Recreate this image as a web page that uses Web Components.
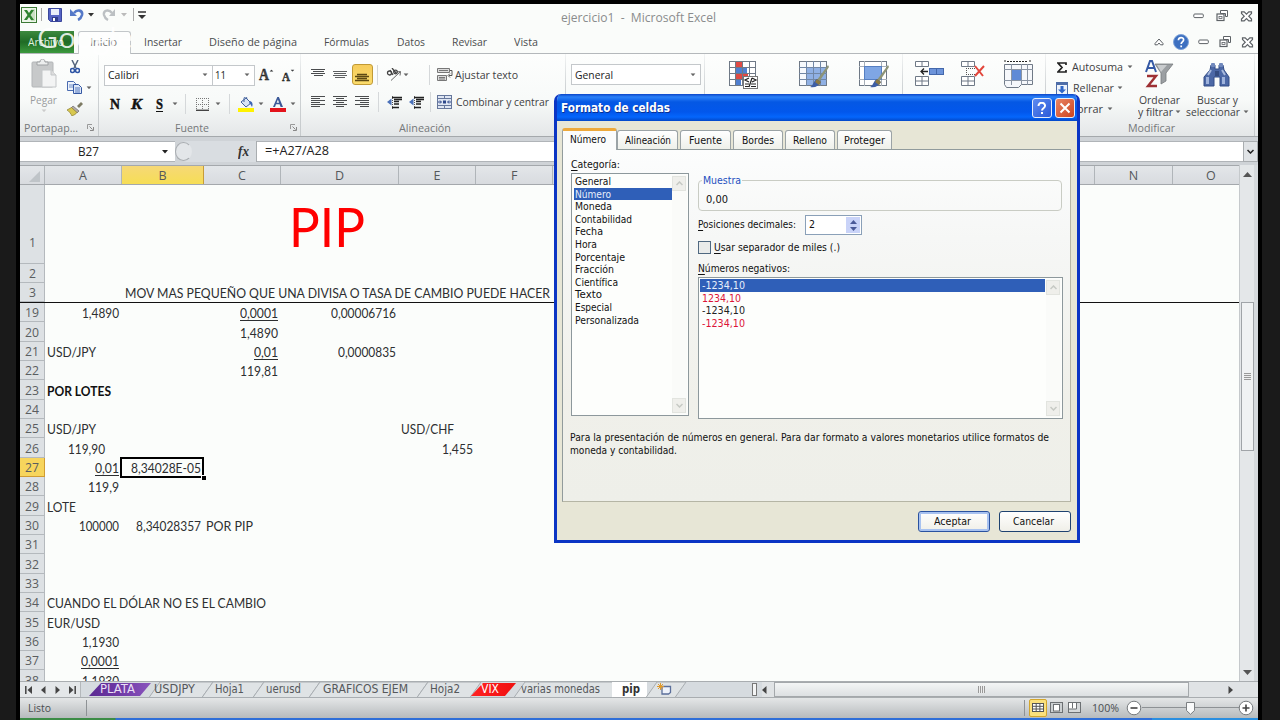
<!DOCTYPE html>
<html lang="es">
<head>
<meta charset="utf-8">
<title>ejercicio1 - Microsoft Excel</title>
<style>
    html, body { margin: 0; height: 100%; }
    body {
        width: 1280px;
        height: 720px;
        overflow: hidden;
        background: #1a1a1a;
        font: 12px/14px "Open Sans", "Noto Sans", sans-serif;
        color: #444;
    }
</style>
</head>
<body>
<excel-app></excel-app>

<script>
const ICONS = {
    excel: [16, 16, '<rect x=".5" y=".5" width="15" height="15" fill="#eef6ea" stroke="#3c7a35"/><rect x="10" y="2" width="4" height="12" fill="#c9e0c2"/><path d="M3 3h3l2 3 2-3h3L9.5 8l3.500 5h-3L8 10l-2 3H3l3.500-5z" fill="#2f8430"/>'],
    save: [14, 14, '<path d="M.5.5h13v13h-11l-2-2z" fill="#5563c4" stroke="#3a479c"/><path d="M3 1h8v6H3z" fill="#e9edfa"/><path d="M4 9h6v4H4z" fill="#2f3c8c"/><path d="M5 10h2v3H5z" fill="#fff"/>'],
    undo: [14, 13, '<path d="M4 5C7 1 13 2 12 7c-.5 2-2 4-4 5" fill="none" stroke="#5579c8" stroke-width="2.600"/><path d="M0 1v7h7z" fill="#5579c8"/>'],
    redo: [14, 13, '<path d="M10 5C7 1 1 2 2 7c.5 2 2 4 4 5" fill="none" stroke="#bcc0c3" stroke-width="2.400"/><path d="M13 1v7H7z" fill="#bcc0c3"/>'],
    qat: [8, 8, '<path d="M0 1h8" stroke="#333" stroke-width="1.500"/><path d="M0 4h8L4 8z" fill="#333"/>'],
    down: [6, 4, '<path d="M0 0h6L3 3.500z" fill="currentColor"/>'],
    min: [12, 6, '<rect x=".8" y="1" width="9.500" height="3.600" rx="1" fill="#fff" stroke="#5d6266"/>'],
    restore: [13, 12, '<path d="M4.500.5h7v6h-2v-3h-5z" fill="#fff" stroke="#5d6266"/><rect x="1" y="4" width="7" height="6.500" fill="#fff" stroke="#5d6266" stroke-width="1.200"/><rect x="3" y="6.500" width="3" height="2" fill="none" stroke="#5d6266" stroke-width=".8"/>'],
    close: [13, 11, '<path d="M1.500.8h2.700l2.300 2.300L8.800.8h2.700v1.700l-2.700 2.700 2.700 2.800v1.800H8.800L6.500 7.500 4.200 9.800H1.500V8l2.700-2.800-2.700-2.700z" fill="#fff" stroke="#5d6266" stroke-width="1.200"/>'],
    up: [10, 8, '<path d="M1 5.500L5 1l4 4.500v1.300H6.500L5 5 3.500 6.800H1z" fill="#fff" stroke="#5d6266"/>'],
    help: [16, 16, '<circle cx="8" cy="8" r="7.500" fill="#3d70c0" stroke="#7ea3d8"/><path d="M5.400 6.200c0-3.600 5.400-3.300 5.200-.3C10.500 8 8.200 7.800 8.200 10M8.200 11.500v1.700" fill="none" stroke="#fff" stroke-width="1.700"/>'],
    paste: [28, 31, '<rect x="2" y="3" width="21" height="25" rx="1" fill="#c7c9ca" stroke="#b3b6b8"/><path d="M7 6V3h3c0-4 5-4 5 0h3v3z" fill="#eceeee" stroke="#9ea1a3"/><path d="M12 11h9l5 5v12H12z" fill="#f3f4f4" stroke="#c3c6c8"/><path d="M21 11v5h5" fill="#ddd" stroke="#c3c6c8"/>'],
    cut: [10, 14, '<path d="M2 0l4 8M8 0L4 8" stroke="#55657d" stroke-width="1.500"/><circle cx="2.500" cy="10.500" r="2" fill="none" stroke="#2e55a5" stroke-width="1.600"/><circle cx="7.500" cy="10.500" r="2" fill="none" stroke="#2e55a5" stroke-width="1.600"/>'],
    copy: [15, 13, '<path d="M.5.5h6l2 2v7h-8z" fill="#eef3fb" stroke="#4a6bb0"/><path d="M2 4h4M2 6h4" stroke="#6f8dc8"/><path d="M6.500 3.500h5l3 3v6h-8z" fill="#dfe8f8" stroke="#3558a3"/><path d="M8 7h5M8 9h5M8 11h5" stroke="#5478bd"/>'],
    brush: [16, 14, '<path d="M10 4l4-4 2 2-4 4z" fill="#7d7a63"/><path d="M6 4l6 5-2 2-6-5z" fill="#b3aca9" stroke="#6c6870" stroke-width=".7"/><path d="M4.500 5.500L0 8c2 1 4 4 5 6 2-1 4-2 5-3.500z" fill="#d8c84f" stroke="#8a7c2e" stroke-width=".7"/>'],
    launcher: [7, 7, '<path d="M.5 5V.5H5" fill="none" stroke="#999"/><path d="M2.500 2.500l3 3M6.500 3v3.500H3" fill="none" stroke="#888"/>'],
    borders: [13, 13, '<path d="M.5 0v12M6.500 0v12M12.500 0v12M0 .5h13M0 6.500h13" stroke="#777" stroke-dasharray="1 1" fill="none"/><path d="M0 12.300h13" stroke="#444" stroke-width="1.400"/>'],
    fill: [16, 15, '<path d="M3 5l5-4 5 5-5 4z" fill="#d9e4f5" stroke="#42609c"/><path d="M6 5V1.500a1.500 1.500 0 013 0" fill="none" stroke="#42609c"/><path d="M12 4c3 1 3 4 2 6-1-1-1-3-3-4z" fill="#3d65b5"/><rect y="11" width="16" height="4" fill="#fff200"/>'],
    fontcolor: [16, 15, '<path d="M3 10L7.300 0h1.600L13 10h-2.400l-1-2.700H6L5 10zM6.600 5.700h2.500L7.900 2.400z" fill="#3b5898"/><rect y="11" width="16" height="4" fill="#e3131b"/>'],
    atop: [15, 9, '<path d="M0 1.500h14M2 3.500h11M0 5.500h14M3 7.500h9" stroke="#4a4c4e" stroke-width="1.200"/>'],
    amid: [15, 9, '<path d="M0 1.500h14M1 3.500h12M0 5.500h14M2 7.500h10" stroke="#5d5f61" stroke-width="1.200"/>'],
    abot: [15, 9, '<path d="M2 1.500h10M0 3.500h14M2 5.500h10M0 7.500h14" stroke="#5d4913" stroke-width="1.300"/>'],
    left: [15, 12, '<path d="M0 .5h14M0 2.500h9M0 4.500h14M0 6.500h9M0 8.500h14M0 10.500h9" stroke="#4a4c4e" stroke-width="1.200"/>'],
    center: [15, 12, '<path d="M0 .5h14M3 2.500h8M0 4.500h14M3 6.500h8M0 8.500h14M3 10.500h8" stroke="#4a4c4e" stroke-width="1.200"/>'],
    right: [15, 12, '<path d="M0 .5h14M5 2.500h9M0 4.500h14M5 6.500h9M0 8.500h14M5 10.500h9" stroke="#4a4c4e" stroke-width="1.200"/>'],
    indent: [16, 13, '<path d="M5 1.500h10M7 3.500h8M7 5.500h5M7 8h5M5 11.500h7" stroke="#222" stroke-width="1.600"/><path d="M0 6l4.500-3.500v7z" fill="#4b71b9"/><path d="M5.500 0v13" stroke="#555" stroke-dasharray="1 1"/>'],
    orient: [16, 13, '<path d="M5 12.500L14 4M14.500 3.500l-4 .5M14.500 3.500l-.5 4" stroke="#666" fill="none"/><circle cx="3.500" cy="5" r="2" fill="none" stroke="#444" stroke-width="1.300"/><path d="M4 2l3 5M6 0l4 5" stroke="#444" stroke-width="1.300"/><circle cx="9.500" cy="4" r="1.800" fill="none" stroke="#444" stroke-width="1.300"/>'],
    wrap: [16, 15, '<path d="M.5 1.500h12v4H.5zM.5 8.500h9v5h-9z" fill="#ddd" stroke="#777"/><path d="M2 3.500h9M2 10.500h6M2 12h6" stroke="#777"/><path d="M13 3.500h2v5h-3M13 6.500l-2 2 2 2" fill="none" stroke="#555"/>'],
    merge: [16, 14, '<rect x=".5" y=".5" width="14" height="13" fill="#dfe6f3" stroke="#66779c"/><path d="M0 3.500h15M0 10.500h15M7.500 0v4M7.500 10v4" stroke="#66779c"/><path d="M1 7h3M11 7h3M3 5.500L4.500 7 3 8.500M12 5.500L10.500 7 12 8.500" stroke="#2c468a" fill="none"/><rect x="6" y="5.500" width="3" height="3" fill="#2c468a"/>'],
    cond: [29, 28, '<rect x=".5" y=".5" width="26" height="24" fill="#fff" stroke="#6f7986"/><rect x="7" y="1" width="6" height="6" fill="#e04a44"/><rect x="7" y="7" width="11" height="6" fill="#4f7fd0"/><rect x="7" y="13" width="12" height="5" fill="#e04a44"/><rect x="7" y="19" width="5" height="5" fill="#4f7fd0"/><path d="M6.500 0v25M13.500 0v25M20.500 0v25M0 6.500h27M0 12.500h27M0 18.500h27" stroke="#6f7986" fill="none"/><rect x="14.500" y="15.500" width="14" height="12" fill="#fff" stroke="#777"/><path d="M20 17l-4 2 4 2M16 23h4M16 25.500h4M23 17l4 2-4 2M22 23h5M22 25.500h5M20 26l3-9" stroke="#222" fill="none" stroke-width="1.200"/>'],
    table: [30, 28, '<rect x=".5" y=".5" width="27" height="24" fill="#f6f9fd" stroke="#6f7986"/><rect x="7" y="7" width="20" height="17" fill="#8fb0e4"/><path d="M7.500 0v25M14.500 0v25M21.500 0v25M0 6.500h28M0 12.500h28M0 18.500h28" stroke="#7187a6" fill="none"/><path d="M29 4L18 19l2 2L30 6z" fill="#8d9477"/><path d="M18 18l4 3c-2 4-6 6-11 5 4-2 3-6 7-8z" fill="#3e5ea4"/><path d="M18 18l4 3-2 3-4-3z" fill="#8c7a42"/>'],
    style: [30, 28, '<rect x=".5" y=".5" width="27" height="24" fill="#fff" stroke="#6f7986"/><path d="M5.500 0v25M22.500 0v25M0 5.500h28M0 18.500h28" stroke="#a7afb8" fill="none"/><rect x="5.500" y="5.500" width="17" height="13" fill="#7fa6e4" stroke="#567fc2"/><path d="M29 4L18 19l2 2L30 6z" fill="#8d9477"/><path d="M18 18l4 3c-2 4-6 6-11 5 4-2 3-6 7-8z" fill="#3e5ea4"/><path d="M18 18l4 3-2 3-4-3z" fill="#8c7a42"/>'],
    insert: [29, 26, '<path d="M.5.5h13v5H.5zM.5 15.500h13v9H.5zM7 0v5M7 15v10M0 20h14" fill="#fff" stroke="#6f7986"/><rect x="14.500" y="7.500" width="14" height="6" fill="#6d94da" stroke="#4468ab"/><path d="M21.500 7v7" stroke="#4468ab"/><path d="M13 10.500H6M9 7.500l-3 3 3 3" fill="none" stroke="#222" stroke-width="1.300"/>'],
    remove: [24, 26, '<path d="M.5.5h13v5H.5zM.5 15.500h13v9H.5zM7 0v5M7 15v10M0 20h14" fill="#fff" stroke="#6f7986"/><path d="M5 7.500h9M5 13.500h9M5.500 7v7" stroke="#555" stroke-dasharray="1 1"/><path d="M14 5l8 10M23 5l-9 10" stroke="#e2463c" stroke-width="2"/>'],
    format: [30, 28, '<path d="M1 0v3M26 0v3M3 1.500h21" stroke="#222" stroke-dasharray="2 1"/><path d="M.5 4.500h28v20h-11l-3 3h-12l-2-3z" fill="#f6f8fb" stroke="#6f7986"/><rect x="8" y="10" width="9" height="10" fill="#5f8ad6"/><path d="M7.500 4v21M17.500 4v21M23.500 4v21M0 9.500h29M0 20.500h29" stroke="#8b95a3" fill="none"/>'],
    sigma: [10, 11, '<path d="M9 3V1H1l4 4.500L1 10h8V8" fill="none" stroke="#222" stroke-width="1.700"/>'],
    filldown: [12, 13, '<rect x=".5" y=".5" width="11" height="12" fill="#eef3fb" stroke="#4e6da8"/><path d="M1 2h10" stroke="#4e6da8" stroke-width="2"/><path d="M4.500 4h3v3.500H10L6 11.500 2 7.500h2.500z" fill="#2f66c8"/>'],
    sort: [29, 29, '<path d="M10 4h18l-7 9v8l-5 3V13z" fill="#9b9fa2" stroke="#777b7e" stroke-width=".8"/><path d="M12 5h10l-6 7z" fill="#c9ccce"/><path d="M1 12L5 1h2l4 11M3 8h6" fill="none" stroke="#3559a5" stroke-width="2"/><path d="M2 16h9L3 26h9" fill="none" stroke="#9e3034" stroke-width="2.400"/>'],
    find: [28, 26, '<path d="M8 3h4v4h4V3h4l1 5 5 7v9h-9v-9h-6v9H1v-9l6-7z" fill="#4c68a6" stroke="#334d86"/><rect x="8" y="1" width="4" height="4" rx="1" fill="#7189bd"/><rect x="16" y="1" width="4" height="4" rx="1" fill="#7189bd"/><rect x="3" y="15" width="3" height="7" fill="#9fb3dc"/><rect x="19" y="15" width="3" height="7" fill="#9fb3dc"/><path d="M8 8l-3 5M19 8l3 5" stroke="#a7b9dd" stroke-width="2"/><rect x="12" y="9" width="4" height="5" fill="#354c80"/>'],
    first: [7, 8, '<path d="M.8 0v8" stroke="#444" stroke-width="1.500"/><path d="M7 0v8L2.500 4z" fill="#444"/>'],
    prev: [5, 8, '<path d="M4.500 0v8L0 4z" fill="#444"/>'],
    next: [5, 8, '<path d="M.5 0v8L5 4z" fill="#444"/>'],
    last: [7, 8, '<path d="M6.200 0v8" stroke="#444" stroke-width="1.500"/><path d="M0 0v8l4.500-4z" fill="#444"/>'],
    newsheet: [15, 12, '<path d="M5 3.500h8.500v6l-2 1.500H5z" fill="#eef2fa" stroke="#5b6f9b" stroke-width="1.300"/><path d="M3.500 0v7M0 3.500h7M1 1l5 5M6 1L1 6" stroke="#e09a2c"/>'],
    vgrid: [13, 10, '<rect x=".5" y=".5" width="11" height="8" fill="#fff" stroke="#555"/><path d="M4.200 0v9M7.900 0v9M0 3.300h12M0 6h12" stroke="#555"/>'],
    vpage: [13, 12, '<rect x=".5" y=".5" width="12" height="10" fill="#ccd0d2" stroke="#6c7073"/><rect x="3.500" y="2.500" width="6" height="6.500" fill="#fff" stroke="#6c7073"/>'],
    vbreak: [13, 12, '<rect x=".5" y=".5" width="12" height="10" fill="#d5d8da" stroke="#6c7073"/><path d="M1 1h3v6H1zM5 1h3v6H5z" fill="#fff"/><path d="M4.500 0v6M8.500 0v7H0" stroke="#6c7073" fill="none"/>'],
    minus: [16, 16, '<circle cx="8" cy="8" r="6.800" fill="#fff" stroke="#777b7e"/><path d="M4.500 8h7" stroke="#444" stroke-width="1.600"/>'],
    plus: [16, 16, '<circle cx="8" cy="8" r="6.800" fill="#fff" stroke="#777b7e"/><path d="M4.500 8h7M8 4.500v7" stroke="#444" stroke-width="1.600"/>'],
    knob: [9, 13, '<path d="M.5.5h8v8l-4 3.800-4-3.800z" fill="#fafbfb" stroke="#7b7f82"/>'],
    corner: [11, 11, '<path d="M11 0v11H0z" fill="#bfc4c8"/>'],
    chevup: [7, 5, '<path d="M.5 4l3-3 3 3" fill="none" stroke="currentColor" stroke-width="1.500"/>'],
    chevdown: [7, 5, '<path d="M.5 1l3 3 3-3" fill="none" stroke="currentColor" stroke-width="1.500"/>'],
    triup: [9, 5, '<path d="M0 5h9L4.500 0z" fill="currentColor"/>'],
    tridown: [9, 5, '<path d="M0 0h9L4.500 5z" fill="currentColor"/>'],
    spinup: [7, 4, '<path d="M0 4h7L3.500 0z" fill="currentColor"/>'],
    spindown: [7, 4, '<path d="M0 0h7L3.500 4z" fill="currentColor"/>'],
    xpclose: [12, 12, '<path d="M1.500 1.500l9 9M10.500 1.500l-9 9" stroke="#fff" stroke-width="2"/>'],
    xphelp: [10, 12, '<path d="M1.500 4C1.500-.5 8.500 0 8 4 7.800 6.500 5 6 5 8.500M5 10v2" fill="none" stroke="#fff" stroke-width="2"/>']
};

class XIcon extends HTMLElement {
    constructor() {
        super();
        this.attachShadow({ mode: 'open' });
    }

    connectedCallback() {
        const [w, h, body] = ICONS[this.getAttribute('name')];
        this.shadowRoot.innerHTML = `
            <style>
                :host { display: block; flex: none; width: ${w}px; height: ${h}px; }
                svg { display: block; }
            </style>
            <svg width="${w}" height="${h}" viewBox="0 0 ${w} ${h}">${body}</svg>
        `;
    }
}

// Text squeezed or stretched to the width given in "w"
class FitText extends HTMLElement {
    constructor() {
        super();
        this.attachShadow({ mode: 'open' });
    }

    connectedCallback() {
        const w = Number(this.getAttribute('w'));
        this.shadowRoot.innerHTML = `
            <style>
                :host { display: block; flex: none; width: ${w}px; white-space: nowrap; }
                span {
                    display: inline-block;
                    transform-origin: 0 50%;
                    text-decoration: var(--line, none);
                    text-underline-offset: 2px;
                    text-decoration-skip-ink: none;
                }
            </style>
            <span><slot></slot></span>
        `;
        const span = this.shadowRoot.querySelector('span');
        const natural = span.getBoundingClientRect().width;
        if (natural) {
            span.style.transform = `scaleX(${w / natural})`;
        }
    }
}

class ExcelApp extends HTMLElement {
    constructor() {
        super();
        this.attachShadow({ mode: 'open' });
    }

    connectedCallback() {
        this.shadowRoot.innerHTML = `
            <style>
                :host {
                    display: flex;
                    flex-direction: column;
                    position: relative;
                    box-sizing: border-box;
                    width: 1246px;
                    height: 720px;
                    margin-left: 16px;
                    border: solid #000;
                    border-width: 4px 4px 0;
                    background: #fbfdfb;
                }
                .taskbar { flex: none; height: 2px; background: linear-gradient(90deg, #3c8c46 0 95px, #2f6fd8 96px 1132px, #2a8fe0 1132px); }
                format-dialog { position: absolute; left: 534px; top: 90px; }
                .mark {
                    position: absolute;
                    left: 17px;
                    top: 16px;
                    color: rgba(255, 255, 255, .85);
                    font: 28px/34px "Open Sans", sans-serif;
                }
            </style>
            <title-bar></title-bar>
            <ribbon-tabs></ribbon-tabs>
            <ribbon-panel></ribbon-panel>
            <formula-bar></formula-bar>
            <sheet-grid></sheet-grid>
            <sheet-tabs></sheet-tabs>
            <status-bar></status-bar>
            <div class="taskbar"></div>
            <fit-text class="mark" w="96">Google</fit-text>
            <format-dialog></format-dialog>
        `;
    }
}

class TitleBar extends HTMLElement {
    constructor() {
        super();
        this.attachShadow({ mode: 'open' });
    }

    connectedCallback() {
        this.shadowRoot.innerHTML = `
            <style>
                :host { display: flex; flex: none; height: 27px; background: #fafcfa; color: #333; }
                .qat { display: flex; align-items: center; height: 21px; width: 541px; padding-left: 1px; box-sizing: border-box; }
                .sep { width: 1px; height: 13px; background: #aaa; }
                .title { margin-top: 7px; color: #8a8c8d; font-size: 12.500px; }
                .win { display: flex; align-items: center; gap: 11px; height: 24px; margin-left: auto; margin-right: 5px; }
            </style>
            <div class="qat">
                <x-icon name="excel"></x-icon>
                <i class="sep" style="margin-left:4px"></i>
                <x-icon name="save" style="margin-left:6px"></x-icon>
                <x-icon name="undo" style="margin-left:8px"></x-icon>
                <x-icon name="down" style="margin-left:4px"></x-icon>
                <x-icon name="redo" style="margin-left:8px"></x-icon>
                <x-icon name="down" style="margin-left:5px;color:#bbb"></x-icon>
                <i class="sep" style="margin-left:6px"></i>
                <x-icon name="qat" style="margin-left:4px"></x-icon>
            </div>
            <fit-text class="title" w="155">ejercicio1 &nbsp;- &nbsp;Microsoft Excel</fit-text>
            <div class="win"><x-icon name="min"></x-icon><x-icon name="restore"></x-icon><x-icon name="close"></x-icon></div>
        `;
    }
}

class RibbonTabs extends HTMLElement {
    constructor() {
        super();
        this.attachShadow({ mode: 'open' });
    }

    connectedCallback() {
        const tabs = [['Insertar', 38, 13], ['Diseño de página', 88, 27], ['Fórmulas', 45, 27], ['Datos', 28, 28], ['Revisar', 35, 27], ['Vista', 24, 27]];
        this.shadowRoot.innerHTML = `
            <style>
                :host { display: flex; flex: none; height: 23px; box-sizing: border-box; border-bottom: 1px solid #b4b8bb; background: #fafcfa; font-size: 11.500px; line-height: 22px; color: #4a4c4e; }
                .file { width: 54px; height: 22px; background: linear-gradient(#3d8a3e, #1f6b25 50%, #3c9a3e); color: #dff0dc; box-sizing: border-box; padding-left: 8px; }
                .home { width: 53px; height: 23px; margin-left: 4px; border: 1px solid #c3c7ca; border-bottom: 0; border-radius: 3px 3px 0 0; box-sizing: border-box; padding-left: 11px; background: #fdfefd; color: #777; line-height: 20px; }
                .right { display: flex; align-items: center; gap: 9px; margin-left: auto; margin-right: 4px; }
            </style>
            <div class="file"><fit-text w="36">Archivo</fit-text></div>
            <div class="home"><fit-text w="27">Inicio</fit-text></div>
            ${tabs.map(([t, w, m]) => `<fit-text w="${w}" style="margin-left:${m}px">${t}</fit-text>`).join('')}
            <div class="right">
                <x-icon name="up"></x-icon><x-icon name="help"></x-icon><x-icon name="min"></x-icon>
                <x-icon name="restore"></x-icon><x-icon name="close"></x-icon>
            </div>
        `;
    }
}

// One group of the ribbon: content on top, caption at the bottom
class RibbonGroup extends HTMLElement {
    constructor() {
        super();
        this.attachShadow({ mode: 'open' });
    }

    connectedCallback() {
        this.shadowRoot.innerHTML = `
            <style>
                :host {
                    display: flex;
                    flex: none;
                    flex-direction: column;
                    box-sizing: border-box;
                    width: ${this.getAttribute('width')}px;
                    border-right: 1px solid;
                    border-image: linear-gradient(#f3f5f5, #cfd3d5 40%, #c6cacc) 1;
                }
                .body { height: 66px; }
                .caption { display: flex; height: 17px; justify-content: center; align-items: center; color: #75787a; font-size: 11.500px; }
            </style>
            <div class="body"><slot></slot></div>
            <div class="caption"><slot name="caption"></slot></div>
        `;
    }
}

class RibbonPanel extends HTMLElement {
    constructor() {
        super();
        this.attachShadow({ mode: 'open' });
    }

    connectedCallback() {
        this.shadowRoot.innerHTML = `
            <style>
                :host { display: flex; flex: none; height: 83px; box-sizing: border-box; border-bottom: 1px solid #a5a9ac; background: linear-gradient(#fdfefd, #f8faf9 55%, #e4e7e8); font-size: 11.500px; color: #3f4143; }
                .row { display: flex; align-items: center; box-sizing: border-box; }
                .box { display: flex; align-items: center; justify-content: space-between; height: 21px; box-sizing: border-box; border: 1px solid #c4c8cb; background: #fff; padding: 0 4px 0 3px; color: #222; }
                .sep { width: 1px; height: 20px; background: #d5d8da; flex: none; }
                .down { color: #666; transform: scale(.85); }
                .serif { font: bold 15px/18px "Liberation Serif", serif; color: #111; -webkit-text-stroke: .4px #111; }
                .on { display: flex; width: 21px; height: 21px; align-items: center; justify-content: center; box-sizing: border-box; border: 1px solid #c19a35; border-radius: 3px; background: linear-gradient(#f6cc5c, #fbdc6c); flex: none; }
                .gray { color: #9a9c9d; }
            </style>
            <ribbon-group width="79">
                <div class="row" style="align-items:flex-start">
                    <div style="width:47px;padding:5px 0 0 10px;box-sizing:border-box">
                        <x-icon name="paste"></x-icon>
                        <fit-text class="gray" w="27" style="margin-top:3px">Pegar</fit-text>
                        <x-icon name="down" class="down" style="margin:2px 0 0 11px;color:#ccc"></x-icon>
                    </div>
                    <div style="padding-top:6px">
                        <x-icon name="cut" style="margin-left:3px"></x-icon>
                        <div class="row" style="margin-top:7px"><x-icon name="copy"></x-icon><x-icon name="down" class="down" style="margin-left:4px"></x-icon></div>
                        <x-icon name="brush" style="margin-top:8px"></x-icon>
                    </div>
                </div>
                <fit-text slot="caption" w="54">Portapap...</fit-text>
                <x-icon slot="caption" name="launcher" style="margin-left:9px"></x-icon>
            </ribbon-group>
            <ribbon-group width="202">
                <div class="row" style="padding:10px 0 0 5px">
                    <div class="box" style="width:109px"><fit-text w="31">Calibri</fit-text><x-icon name="down" class="down"></x-icon></div>
                    <div class="box" style="width:42px;border-left:0;padding-left:2px"><fit-text w="11">11</fit-text><x-icon name="down" class="down"></x-icon></div>
                    <fit-text class="serif" w="10" style="margin-left:4px;color:#444;font-size:17px">A</fit-text>
                    <x-icon name="triup" style="transform:scale(.45);margin:-9px 0 0 -2px"></x-icon>
                    <fit-text class="serif" w="8" style="margin:4px 0 0 6px;color:#444;font-size:13px">A</fit-text>
                    <x-icon name="tridown" style="transform:scale(.45);margin:-9px 0 0 -2px"></x-icon>
                </div>
                <div class="row" style="padding:8px 0 0 11px">
                    <fit-text class="serif" w="10">N</fit-text>
                    <fit-text class="serif" w="11" style="margin-left:11px;font-style:italic">K</fit-text>
                    <fit-text class="serif" w="7" style="margin-left:14px;--line:underline">S</fit-text>
                    <x-icon name="down" class="down" style="margin-left:9px"></x-icon>
                    <i class="sep" style="margin-left:7px"></i>
                    <x-icon name="borders" style="margin-left:10px"></x-icon>
                    <x-icon name="down" class="down" style="margin-left:6px"></x-icon>
                    <i class="sep" style="margin-left:8px"></i>
                    <x-icon name="fill" style="margin-left:8px"></x-icon>
                    <x-icon name="down" class="down" style="margin-left:4px"></x-icon>
                    <x-icon name="fontcolor" style="margin-left:6px"></x-icon>
                    <x-icon name="down" class="down" style="margin-left:4px"></x-icon>
                </div>
                <fit-text slot="caption" w="34" style="margin-left:73px">Fuente</fit-text>
                <x-icon slot="caption" name="launcher" style="margin-left:81px"></x-icon>
            </ribbon-group>
            <ribbon-group width="265">
                <div class="row" style="padding:10px 0 0 10px">
                    <x-icon name="atop" style="margin-top:-5px"></x-icon>
                    <x-icon name="amid" style="margin-left:7px"></x-icon>
                    <span class="on" style="margin-left:4px"><x-icon name="abot" style="margin-top:5px"></x-icon></span>
                    <i class="sep" style="margin-left:4px"></i>
                    <x-icon name="orient" style="margin-left:8px"></x-icon>
                    <x-icon name="down" class="down" style="margin-left:1px"></x-icon>
                    <i class="sep" style="margin-left:20px"></i>
                    <x-icon name="wrap" style="margin-left:7px"></x-icon>
                    <fit-text w="63" style="margin-left:2px">Ajustar texto</fit-text>
                </div>
                <div class="row" style="padding:7px 0 0 10px">
                    <x-icon name="left"></x-icon>
                    <x-icon name="center" style="margin-left:7px"></x-icon>
                    <x-icon name="right" style="margin-left:7px"></x-icon>
                    <i class="sep" style="margin-left:8px"></i>
                    <x-icon name="indent" style="margin-left:8px"></x-icon>
                    <x-icon name="indent" style="margin-left:6px"></x-icon>
                    <i class="sep" style="margin-left:5px"></i>
                    <x-icon name="merge" style="margin-left:6px"></x-icon>
                    <fit-text w="93" style="margin-left:3px">Combinar y centrar</fit-text>
                </div>
                <fit-text slot="caption" w="52" style="margin-right:17px">Alineación</fit-text>
            </ribbon-group>
            <ribbon-group width="139">
                <div class="row" style="padding:10px 0 0 5px">
                    <div class="box" style="width:130px"><fit-text w="38">General</fit-text><x-icon name="down" class="down"></x-icon></div>
                </div>
            </ribbon-group>
            <ribbon-group width="198">
                <div class="row" style="padding:7px 0 0 24px;align-items:flex-start">
                    <x-icon name="cond"></x-icon>
                    <x-icon name="table" style="margin-left:41px"></x-icon>
                    <x-icon name="style" style="margin-left:30px"></x-icon>
                </div>
            </ribbon-group>
            <ribbon-group width="143">
                <div class="row" style="padding:7px 0 0 12px;align-items:flex-start">
                    <x-icon name="insert"></x-icon>
                    <x-icon name="remove" style="margin-left:17px"></x-icon>
                    <x-icon name="format" style="margin:-1px 0 0 19px"></x-icon>
                </div>
            </ribbon-group>
            <ribbon-group width="209">
                <div class="row" style="align-items:flex-start">
                    <div style="padding:6px 0 0 10px;width:90px;box-sizing:border-box">
                        <div class="row"><x-icon name="sigma" style="margin-left:1px"></x-icon><fit-text w="51" style="margin-left:5px">Autosuma</fit-text><x-icon name="down" class="down" style="margin-left:4px"></x-icon></div>
                        <div class="row" style="margin-top:7px"><x-icon name="filldown"></x-icon><fit-text w="41" style="margin-left:5px">Rellenar</fit-text><x-icon name="down" class="down" style="margin-left:3px"></x-icon></div>
                        <div class="row" style="margin-top:7px"><fit-text w="33" style="margin-left:14px">Borrar</fit-text><x-icon name="down" class="down" style="margin-left:4px"></x-icon></div>
                    </div>
                    <div style="width:50px;padding:6px 0 0 2px;box-sizing:border-box">
                        <x-icon name="sort" style="margin-left:7px"></x-icon>
                        <fit-text w="41" style="margin:4px 0 0 1px">Ordenar</fit-text>
                        <div class="row" style="margin-top:-2px"><fit-text w="35">y filtrar</fit-text><x-icon name="down" class="down" style="margin-left:2px"></x-icon></div>
                    </div>
                    <div style="width:66px;padding:8px 0 0">
                        <x-icon name="find" style="margin-left:17px"></x-icon>
                        <fit-text w="41" style="margin:5px 0 0 11px">Buscar y</fit-text>
                        <div class="row" style="margin-top:-2px"><fit-text w="54">seleccionar</fit-text><x-icon name="down" class="down" style="margin-left:3px"></x-icon></div>
                    </div>
                </div>
                <fit-text slot="caption" w="47" style="margin-left:3px">Modificar</fit-text>
            </ribbon-group>
        `;
    }
}

class FormulaBar extends HTMLElement {
    constructor() {
        super();
        this.attachShadow({ mode: 'open' });
    }

    connectedCallback() {
        this.shadowRoot.innerHTML = `
            <style>
                :host { display: flex; flex: none; align-items: center; height: 28px; box-sizing: border-box; padding: 4px 0 3px; background: #cfd3d7; color: #222; }
                .name { display: flex; align-items: center; width: 155px; height: 21px; background: #fff; font-size: 12px; border: solid #b0b4b8; border-width: 1px 0; box-sizing: border-box; }
                .fx { display: flex; align-items: center; width: 81px; height: 21px; margin-left: 1px; background: #d9dde1; border-right: 1px solid #a9adb0; border-radius: 11px 0 0 11px; box-sizing: border-box; }
                .dot { width: 15px; height: 17px; margin-left: -1px; border: 1.500px solid #a9adb1; border-right-color: transparent; border-radius: 50%; background: #e3e6e9; }
                .fn { margin-left: 46px; font: italic bold 14px/18px "Liberation Serif", serif; color: #333; }
                .text { flex: 1; height: 21px; box-sizing: border-box; padding: 2px 0 0 8px; background: #fff; border: solid #b0b4b8; border-width: 1px 0; font-size: 12.500px; }
                .more { display: flex; align-items: center; justify-content: center; width: 15px; height: 21px; background: #e0e3e6; border: 1px solid #a9adb0; box-sizing: border-box; }
            </style>
            <div class="name">
                <fit-text w="21" style="margin-left:58px">B27</fit-text>
                <x-icon name="down" style="margin-left:63px"></x-icon>
            </div>
            <div class="fx"><i class="dot"></i><fit-text class="fn" w="11">fx</fit-text></div>
            <div class="text"><fit-text w="64">=+A27/A28</fit-text></div>
            <div class="more"><x-icon name="chevdown"></x-icon></div>
        `;
    }
}

class SheetGrid extends HTMLElement {
    constructor() {
        super();
        this.attachShadow({ mode: 'open' });
    }

    connectedCallback() {
        const cols = { A: 77, B: 82, C: 77, D: 118, E: 77, F: 77.4, N: 77.4, O: 77.4 };
        // row: [[column, text, width, classes]]
        const cells = {
            1: [['D', 'PIP', 76, 'big']],
            3: [['B', 'MOV MAS PEQUEÑO QUE UNA DIVISA O TASA DE CAMBIO PUEDE HACER', 425, '']],
            19: [['A', '1,4890', 37, 'num'], ['C', '0,0001', 38, 'num u'], ['D', '0,00006716', 65, 'num']],
            20: [['C', '1,4890', 38, 'num']],
            21: [['A', 'USD/JPY', 49, ''], ['C', '0,01', 24, 'num u'], ['D', '0,0000835', 58, 'num']],
            22: [['C', '119,81', 38, 'num']],
            23: [['A', 'POR LOTES', 64, 'b']],
            25: [['A', 'USD/JPY', 49, ''], ['E', 'USD/CHF', 53, '']],
            26: [['A', '119,90', 37, 'num ind'], ['E', '1,455', 31, 'num']],
            27: [['A', '0,01', 24, 'num u'], ['B', '8,34028E-05', 70, 'num sel']],
            28: [['A', '119,9', 31, 'num']],
            29: [['A', 'LOTE', 29, '']],
            30: [['A', '100000', 40, 'num'], ['B', '8,34028357', 65, 'num'], ['C', 'POR PIP', 47, '']],
            34: [['A', 'CUANDO EL DÓLAR NO ES EL CAMBIO', 219, '']],
            35: [['A', 'EUR/USD', 53, '']],
            36: [['A', '1,1930', 37, 'num']],
            37: [['A', '0,0001', 38, 'num u']],
            38: [['A', '1,1930', 37, 'num']]
        };
        const rows = [1, 2, 3];
        for (let n = 19; n <= 38; n++) rows.push(n);
        const names = Object.keys(cols).slice(0, 5);

        const headHtml = c => {
            // columns G to M lie under the dialog
            const gap = c === 'N' ? '<div style="width:541.800px"></div>' : '';
            return `${gap}<div class="${c === 'B' ? 'hot' : ''}" style="width:${cols[c]}px">${c}</div>`;
        };

        const rowHtml = n => `
            <div class="row r${n}">
                <div class="head ${n === 27 ? 'hot' : ''}"><fit-text w="${n > 9 ? 14 : 7}">${n}</fit-text></div>
                ${names.map(c => {
                    const cell = (cells[n] || []).find(x => x[0] === c);
                    return `<div class="cell ${cell ? cell[3] : ''}" style="width:${cols[c]}px">${cell ? `<fit-text w="${cell[2]}">${cell[1]}</fit-text>` : ''}</div>`;
                }).join('')}
            </div>`;

        this.shadowRoot.innerHTML = `
            <style>
                :host { display: flex; flex: none; height: 516px; overflow: hidden; border-right: 4px solid #d5d9dc; font: 12.500px/16px Lato, sans-serif; color: #2d2f31; }
                .sheet { width: 1219px; overflow: hidden; background: #fbfdfb; }
                .cols { display: flex; height: 20px; box-sizing: border-box; border: solid #a4a8ac; border-width: 1px 0; background: linear-gradient(#e3e6e9, #d8dbdf); font: 12.500px/18px "Open Sans", sans-serif; color: #55585b; }
                .cols div { box-sizing: border-box; border-right: 1px solid #b0b5b9; text-align: center; flex: none; padding-top: 1px; }
                .cols .hot { background: linear-gradient(#f6d877, #f6de55); border-color: #c79c38; }
                .cols .all { width: 25px; padding: 5px 0 0 9px; }
                .row { display: flex; height: 19.330px; box-sizing: border-box; }
                .r1 { height: 79px; align-items: flex-end; }
                .r2 { height: 19px; }
                .r3 { height: 20px; border-bottom: 1.500px solid #111; }
                .head { display: flex; align-items: flex-end; justify-content: center; width: 25px; height: 100%; box-sizing: border-box; border: solid #b4b9bd; border-width: 0 1px 1px 0; background: #dde1e4; color: #5a5d60; flex: none; font: 12px/16px "Open Sans", sans-serif; }
                .r1 .head { padding-bottom: 12px; }
                .head.hot { background: #f7d55c; border-color: #d09c32; }
                .cell { display: flex; align-items: flex-end; height: 100%; box-sizing: border-box; padding-left: 2px; flex: none; }
                .r3 .cell { padding-left: 3px; }
                .num { justify-content: flex-end; padding: 0 3px 0 0; }
                .ind { padding-right: 17px; }
                .u { --line: underline; }
                .b { font-weight: bold; color: #111; }
                .big { color: #f00; font-size: 55px; line-height: 66px; padding: 0 0 5px 8px; }
                .sel { position: relative; }
                .sel::before { content: ""; position: absolute; inset: -1px 0 -1px -2px; border: 2.500px solid #000; }
                .sel::after { content: ""; position: absolute; right: -2px; bottom: -3px; width: 4px; height: 4px; background: #000; border: solid #fff; border-width: 1px 0 0 1px; }
                .vscroll { display: flex; flex-direction: column; align-items: center; width: 15px; background: #e4e7e9; color: #555; border-left: 1px solid #c5c9cc; box-sizing: border-box; }
                .thumb { display: flex; align-items: center; justify-content: center; width: 13px; height: 149px; margin-top: 125px; box-sizing: border-box; border: 1px solid #a0a4a8; background: #f0f2f3; }
                .thumb i { width: 7px; height: 7px; background: repeating-linear-gradient(#999 0 1px, #eee 1px 2px); }
            </style>
            <div class="sheet">
                <div class="cols">
                    <div class="all"><x-icon name="corner"></x-icon></div>
                    ${Object.keys(cols).map(headHtml).join('')}
                </div>
                ${rows.map(rowHtml).join('')}
            </div>
            <div class="vscroll">
                <x-icon name="triup" style="margin-top:7px"></x-icon>
                <div class="thumb"><i></i></div>
                <x-icon name="tridown" style="margin:auto 0 6px"></x-icon>
            </div>
        `;
    }
}

class SheetTab extends HTMLElement {
    constructor() {
        super();
        this.attachShadow({ mode: 'open' });
    }

    connectedCallback() {
        const w = Number(this.getAttribute('width'));
        const fill = this.getAttribute('fill') || '#dfe3e5';
        const colored = fill.startsWith('url');
        this.shadowRoot.innerHTML = `
            <style>
                :host { display: block; position: relative; flex: none; width: ${w}px; height: 16px; }
                svg { position: absolute; left: 0; top: 0; overflow: visible; }
                .text { position: relative; padding-left: ${this.getAttribute('pad')}px; }
            </style>
            <svg width="${w}" height="16">
                <defs>
                    <linearGradient id="p" x2="1"><stop stop-color="#5b2a92"/><stop offset=".5" stop-color="#6f3aa6"/><stop offset="1" stop-color="#8a55bd"/></linearGradient>
                    <linearGradient id="r" x2="1"><stop stop-color="#f22"/><stop offset="1" stop-color="#f01010"/></linearGradient>
                </defs>
                <path d="${colored ? `M1 14L13 1H${w + 2}L${w - 9} 14z` : `M0 15.500L11 0H${w + 11}L${w} 15.500z`}" fill="${fill}" stroke="${colored ? 'none' : '#a9aeb2'}"/>
            </svg>
            <div class="text"><slot></slot></div>
        `;
    }
}

class SheetTabs extends HTMLElement {
    constructor() {
        super();
        this.attachShadow({ mode: 'open' });
    }

    connectedCallback() {
        this.shadowRoot.innerHTML = `
            <style>
                :host { display: flex; flex: none; height: 17px; box-sizing: border-box; border: solid #a9adb0; border-width: 1px 0; background: #d6dbdf; font: 12px/15px "DejaVu Sans", sans-serif; color: #55585b; }
                .nav { display: flex; align-items: center; gap: 9px; width: 61px; padding-left: 5px; box-sizing: border-box; border-right: 1px solid #b4b8bb; background: #e4e7e9; }
                .pip { position: relative; width: 35px; padding-left: 10px; box-sizing: border-box; background: #fff; color: #333; font-weight: bold; flex: none; }
                .split { width: 5px; margin: 1px 5px 1px auto; border: 1px solid #777; background: #f4f5f5; box-sizing: border-box; }
                .hs { display: flex; align-items: center; width: 496px; background: #e0e3e5; flex: none; }
                .thumb { display: flex; align-items: center; justify-content: center; width: 415px; height: 15px; margin-left: 7px; box-sizing: border-box; border: 1px solid #a4a8ab; background: linear-gradient(#f3f5f5, #dde0e2); }
                .thumb i { width: 7px; height: 7px; background: repeating-linear-gradient(90deg, #999 0 1px, #eee 1px 2px); }
            </style>
            <div class="nav"><x-icon name="first"></x-icon><x-icon name="prev"></x-icon><x-icon name="next"></x-icon><x-icon name="last"></x-icon></div>
            <sheet-tab width="61" pad="12" fill="url(#p)" style="margin-left:7px;color:#eadff5"><fit-text w="35">PLATA</fit-text></sheet-tab>
            <sheet-tab width="53" pad="5"><fit-text w="41">USDJPY</fit-text></sheet-tab>
            <sheet-tab width="51" pad="13"><fit-text w="29">Hoja1</fit-text></sheet-tab>
            <sheet-tab width="56" pad="13"><fit-text w="35">uerusd</fit-text></sheet-tab>
            <sheet-tab width="108" pad="14"><fit-text w="85">GRAFICOS EJEM</fit-text></sheet-tab>
            <sheet-tab width="53" pad="13"><fit-text w="30">Hoja2</fit-text></sheet-tab>
            <sheet-tab width="44" pad="11" fill="url(#r)" style="color:#fff"><fit-text w="18">VIX</fit-text></sheet-tab>
            <sheet-tab width="98" pad="7"><fit-text w="79">varias monedas</fit-text></sheet-tab>
            <div class="pip"><fit-text w="18">pip</fit-text></div>
            <sheet-tab width="29" pad="11" style="margin-left:-1px"><x-icon name="newsheet" style="padding-top:1px"></x-icon></sheet-tab>
            <div class="split"></div>
            <div class="hs">
                <x-icon name="prev"></x-icon>
                <div class="thumb"><i></i></div>
                <x-icon name="next" style="margin-left:39px"></x-icon>
            </div>
        `;
    }
}

class StatusBar extends HTMLElement {
    constructor() {
        super();
        this.attachShadow({ mode: 'open' });
    }

    connectedCallback() {
        this.shadowRoot.innerHTML = `
            <style>
                :host { display: flex; flex: none; align-items: center; height: 20px; background: linear-gradient(#e4e6e7, #b7bbbd); font-size: 11.500px; color: #4a4d50; }
                .sep { width: 1px; height: 16px; background: #8e9295; }
                .on { display: flex; align-items: center; justify-content: center; width: 18px; height: 18px; box-sizing: border-box; border: 1.500px solid #d3a52c; border-radius: 2px; background: #fbe07c; }
                .zoom { display: flex; align-items: center; width: 98px; height: 14px; background: linear-gradient(transparent 6px, #8d9194 6px 7px, transparent 7px); }
            </style>
            <fit-text w="23" style="margin-left:8px">Listo</fit-text>
            <i class="sep" style="margin-left:35px"></i>
            <i class="sep" style="margin-left:auto"></i>
            <span class="on" style="margin-left:4px"><x-icon name="vgrid"></x-icon></span>
            <x-icon name="vpage" style="margin-left:3px"></x-icon>
            <x-icon name="vbreak" style="margin-left:5px"></x-icon>
            <fit-text w="27" style="margin-left:11px">100%</fit-text>
            <x-icon name="minus" style="margin-left:7px"></x-icon>
            <div class="zoom"><x-icon name="knob" style="margin-left:44px"></x-icon></div>
            <x-icon name="plus" style="margin:0 4px 0 -2px"></x-icon>
        `;
    }
}

class FormatDialog extends HTMLElement {
    constructor() {
        super();
        this.attachShadow({ mode: 'open' });
    }

    connectedCallback() {
        const tabs = [['Alineación', 61, 46], ['Fuente', 51, 33], ['Bordes', 50, 32], ['Relleno', 50, 34], ['Proteger', 55, 41]];
        const cats = [['General', 36], ['Número', 36], ['Moneda', 37], ['Contabilidad', 57], ['Fecha', 28], ['Hora', 22], ['Porcentaje', 50], ['Fracción', 39], ['Científica', 43], ['Texto', 27], ['Especial', 37], ['Personalizada', 64]];
        const negs = [['-1234,10', 43, '#e8effb'], ['1234,10', 39, '#dc1438'], ['-1234,10', 43, '#222'], ['-1234,10', 43, '#dc1438']];
        this.shadowRoot.innerHTML = `
            <style>
                :host {
                    display: flex;
                    flex-direction: column;
                    box-sizing: border-box;
                    width: 526px;
                    height: 449px;
                    border: solid #0b35c4;
                    border-width: 0 3px 3px;
                    border-radius: 7px 7px 0 0;
                    background: #e7e6d6;
                    color: #111;
                    font: 11px/13px "DejaVu Sans", sans-serif;
                    overflow: hidden;
                }
                .title { display: flex; align-items: center; flex: none; height: 27px; margin: 0 -3px; padding: 0 5px 0 7px; background: linear-gradient(#0a45c8, #2a80f8 3px, #0558e4 8px, #0257ec 18px, #0466fc 23px, #0348c8); color: #fff; font: bold 12px/16px "DejaVu Sans", sans-serif; text-shadow: 1px 1px #0a2f90; }
                .tb { display: flex; align-items: center; justify-content: center; width: 20px; height: 20px; box-sizing: border-box; border: 1px solid #e6edfb; border-radius: 3px; background: linear-gradient(135deg, #5d8bf0, #2c5ad8); }
                .tb.x { margin-left: 3px; background: linear-gradient(135deg, #e98565, #cc4420); }
                .tabs { display: flex; align-items: flex-end; gap: 2px; height: 28px; padding-left: 5px; }
                .tab { display: flex; justify-content: center; align-items: center; height: 19px; box-sizing: border-box; border: 1px solid #9ba3a6; border-bottom: 0; border-radius: 3px 3px 0 0; background: linear-gradient(#fff, #eef0ea); }
                .tab.on { position: relative; width: 55px; height: 22px; margin: 0 -2px -1px 0; padding: 0 3px 2px 0; border-top: 3px solid #eda93c; background: #fbfcfc; }
                .panel { display: flex; height: 353px; box-sizing: border-box; margin: 0 6px 0 5px; padding: 8px 6px 0 8px; border: 1px solid #919b9c; border-right-color: #b5b5a5; border-bottom-color: #b5b5a5; background: linear-gradient(#fcfdfd, #f6f7f6 25%, #f0f0ea 70%, #eeefe9); flex-wrap: wrap; align-content: flex-start; }
                .list { display: flex; justify-content: space-between; box-sizing: border-box; border: 1px solid #8d989c; background: #fdfefc; padding: 1px; }
                .item { height: 12.600px; box-sizing: border-box; padding-left: 1px; }
                .item.on { background: #2f5fb8; color: #e8effb; }
                .bar { display: flex; flex-direction: column; justify-content: space-between; width: 15px; background: #fafbf9; color: #c6c9c4; padding: 1px 0; }
                .bar span, .spin { display: flex; align-items: center; justify-content: center; width: 14px; height: 15px; box-sizing: border-box; border: 1px solid #e2e4df; background: #efefeb; }
                fieldset { box-sizing: border-box; width: 364px; height: 37px; margin: 1px 0 0; padding: 0 0 0 7px; border: 1px solid #c9ccc4; border-radius: 4px; }
                legend { margin-left: -4px; padding: 0 1px; color: #2450c0; }
                .input { display: flex; justify-content: space-between; width: 57px; height: 20px; box-sizing: border-box; margin-left: 9px; padding: 2px 1px 0 3px; border: 1px solid #8aa0b8; background: #fff; }
                .spin { flex-direction: column; gap: 3px; height: 16px; margin-top: -1px; border: 0; background: #c9d3f8; color: #4a5a98; }
                .row { display: flex; align-items: center; }
                .check { width: 13px; height: 13px; box-sizing: border-box; border: 1px solid #4f6880; background: #e9ebea; }
                .desc { width: 100%; margin: 12px 0 0 -1px; }
                .buttons { display: flex; justify-content: flex-end; gap: 9px; margin: 9px 6px 0 0; }
                .btn { display: flex; align-items: center; justify-content: center; width: 72px; height: 21px; box-sizing: border-box; padding-right: 3px; border: 1px solid #1e4270; border-radius: 3px; background: linear-gradient(#fff, #f0efe8); }
                .btn.def { box-shadow: inset 0 0 0 2px #a8c2f0; border-color: #2a52a0; }
            </style>
            <div class="title">
                <fit-text w="109">Formato de celdas</fit-text>
                <span class="tb" style="margin-left:auto"><x-icon name="xphelp"></x-icon></span>
                <span class="tb x"><x-icon name="xpclose"></x-icon></span>
            </div>
            <div class="tabs">
                <div class="tab on"><fit-text w="36">Número</fit-text></div>
                ${tabs.map(([t, w, tw]) => `<div class="tab" style="width:${w}px"><fit-text w="${tw}">${t}</fit-text></div>`).join('')}
            </div>
            <div class="panel">
                <div style="width:118px">
                    <fit-text w="49"><u>C</u>ategoría:</fit-text>
                    <div class="list" style="height:243px;margin-top:2px">
                        <div style="width:98px;padding-left:1px">
                            ${cats.map(([t, w], i) => `<div class="item ${i === 1 ? 'on' : ''}"><fit-text w="${w}">${t}</fit-text></div>`).join('')}
                        </div>
                        <div class="bar"><span><x-icon name="chevup"></x-icon></span><span><x-icon name="chevdown"></x-icon></span></div>
                    </div>
                </div>
                <div style="width:365px;margin:15px 0 0 9px">
                    <fieldset>
                        <legend><fit-text w="38">Muestra</fit-text></legend>
                        <fit-text w="22" style="margin-top:6px">0,00</fit-text>
                    </fieldset>
                    <div class="row" style="margin-top:4px">
                        <fit-text w="98" style="margin-top:-2px"><u>P</u>osiciones decimales:</fit-text>
                        <div class="input"><fit-text w="6">2</fit-text><span class="spin"><x-icon name="spinup"></x-icon><x-icon name="spindown"></x-icon></span></div>
                    </div>
                    <div class="row" style="margin-top:6px"><i class="check"></i><fit-text w="126" style="margin-left:3px"><u>U</u>sar separador de miles (.)</fit-text></div>
                    <fit-text w="92" style="margin-top:8px"><u>N</u>úmeros negativos:</fit-text>
                    <div class="list" style="height:142px;margin-top:2px">
                        <div style="width:345px">
                            ${negs.map(([t, w, c], i) => `<div class="item ${i === 0 ? 'on' : ''}" style="color:${c};padding-left:2px"><fit-text w="${w}">${t}</fit-text></div>`).join('')}
                        </div>
                        <div class="bar"><span><x-icon name="chevup"></x-icon></span><span><x-icon name="chevdown"></x-icon></span></div>
                    </div>
                </div>
                <div class="desc">
                    <fit-text w="479">Para la presentación de números en general. Para dar formato a valores monetarios utilice formatos de</fit-text>
                    <fit-text w="107">moneda y contabilidad.</fit-text>
                </div>
            </div>
            <div class="buttons">
                <div class="btn def"><fit-text w="37">Aceptar</fit-text></div>
                <div class="btn"><fit-text w="41">Cancelar</fit-text></div>
            </div>
        `;
    }
}

customElements.define('x-icon', XIcon);
customElements.define('title-bar', TitleBar);
customElements.define('ribbon-tabs', RibbonTabs);
customElements.define('ribbon-group', RibbonGroup);
customElements.define('ribbon-panel', RibbonPanel);
customElements.define('formula-bar', FormulaBar);
customElements.define('sheet-grid', SheetGrid);
customElements.define('sheet-tab', SheetTab);
customElements.define('sheet-tabs', SheetTabs);
customElements.define('status-bar', StatusBar);
customElements.define('format-dialog', FormatDialog);
customElements.define('excel-app', ExcelApp);
// measures its text, so it comes after every element that sets a font
customElements.define('fit-text', FitText);
</script>
</body>
</html>
